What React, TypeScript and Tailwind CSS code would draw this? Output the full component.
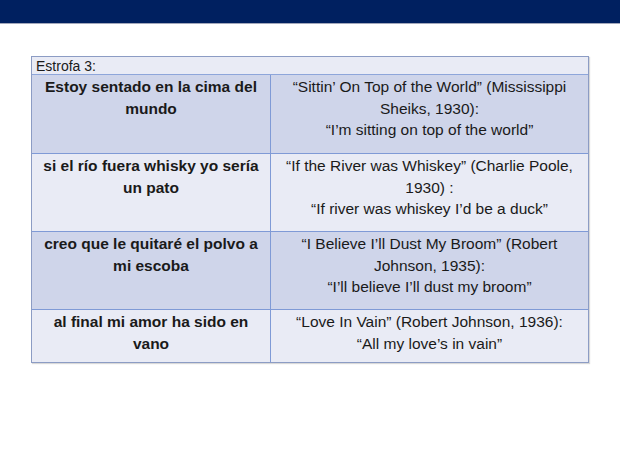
const rows = [
  {
    es: "Estoy sentado en la cima del mundo",
    en: ["“Sittin’ On Top of the World” (Mississippi Sheiks, 1930):", "“I’m sitting on top of the world”"],
    bg: "bg-[#cfd5ea]",
    h: "h-[79px]",
  },
  {
    es: "si el río fuera whisky yo sería un pato",
    en: ["“If the River was Whiskey” (Charlie Poole, 1930) :", "“If river was whiskey I’d be a duck”"],
    bg: "bg-[#e9ebf5]",
    h: "h-[78px]",
  },
  {
    es: "creo que le quitaré el polvo a mi escoba",
    en: ["“I Believe I’ll Dust My Broom” (Robert Johnson, 1935):", "“I’ll believe I’ll dust my broom”"],
    bg: "bg-[#cfd5ea]",
    h: "h-[78px]",
  },
  {
    es: "al final mi amor ha sido en vano",
    en: ["“Love In Vain” (Robert Johnson, 1936):", "“All my love’s in vain”"],
    bg: "bg-[#e9ebf5]",
    h: "h-[52px]",
  },
];

export default function App() {
  return (
    <div className="w-[620px] h-[465px] bg-white font-['Liberation_Sans',Arial,sans-serif] text-[#1a1a1a]">
      <div className="h-[24px] bg-[#002060] border-b border-[#a3a8bb]" />
      <div className="pl-[31px] pt-[32px]">
        <div className="w-[558px] border border-[#8c9cc4] shadow-[1px_1px_1px_rgba(0,0,0,0.15)]">
          <div className="h-[18px] bg-[#e9ebf5] border-b border-[#8ea6da] px-[4px] text-[14px] leading-[18px]">
            Estrofa 3:
          </div>
          {rows.map((r, i) => (
            <div
              key={i}
              className={`flex ${r.bg} ${r.h} ${i < rows.length - 1 ? "border-b border-[#7f9ad6]" : ""}`}
            >
              <div className="w-[239px] shrink-0 border-r border-[#7f9ad6] px-[10px] pt-[1px] text-center text-[15.5px] leading-[21.5px] font-bold">
                {r.es}
              </div>
              <div className="flex-1 px-[12px] pt-[1px] text-center text-[15.5px] leading-[21.5px]">
                <div>{r.en[0]}</div>
                <div>{r.en[1]}</div>
              </div>
            </div>
          ))}
        </div>
      </div>
    </div>
  );
}
